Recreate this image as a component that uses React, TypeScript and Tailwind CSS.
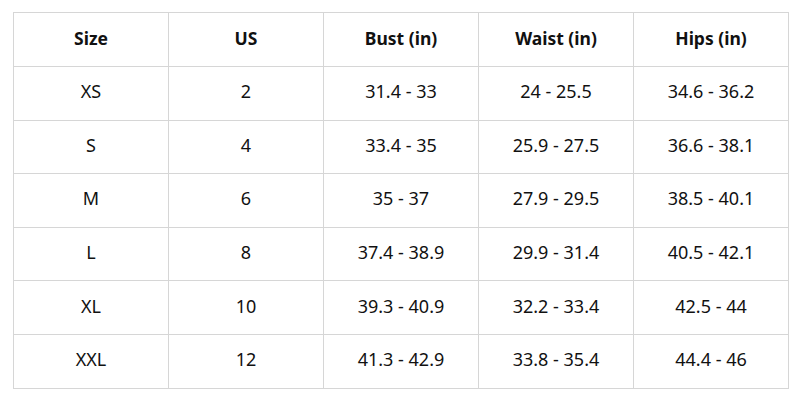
const headers = ['Size', 'US', 'Bust (in)', 'Waist (in)', 'Hips (in)'];

const rows = [
  ['XS', '2', '31.4 - 33', '24 - 25.5', '34.6 - 36.2'],
  ['S', '4', '33.4 - 35', '25.9 - 27.5', '36.6 - 38.1'],
  ['M', '6', '35 - 37', '27.9 - 29.5', '38.5 - 40.1'],
  ['L', '8', '37.4 - 38.9', '29.9 - 31.4', '40.5 - 42.1'],
  ['XL', '10', '39.3 - 40.9', '32.2 - 33.4', '42.5 - 44'],
  ['XXL', '12', '41.3 - 42.9', '33.8 - 35.4', '44.4 - 46'],
];

export default function App() {
  return (
    <div className="w-[800px] h-[400px] bg-white pt-[12px] pl-[13px] font-['Noto_Sans',sans-serif] text-[#111]">
      <table className="w-[776px] table-fixed border-collapse">
        <thead>
          <tr className="h-[54px]">
            {headers.map((h) => (
              <th key={h} className="border border-[#d6d6d6] pb-[3px] text-[17.5px] font-bold text-center align-middle">
                {h}
              </th>
            ))}
          </tr>
        </thead>
        <tbody>
          {rows.map((r) => (
            <tr key={r[0]} className="h-[53.6px]">
              {r.map((c, i) => (
                <td key={i} className="border border-[#d6d6d6] pb-[3px] text-[18px] text-center align-middle">
                  {c}
                </td>
              ))}
            </tr>
          ))}
        </tbody>
      </table>
    </div>
  );
}
